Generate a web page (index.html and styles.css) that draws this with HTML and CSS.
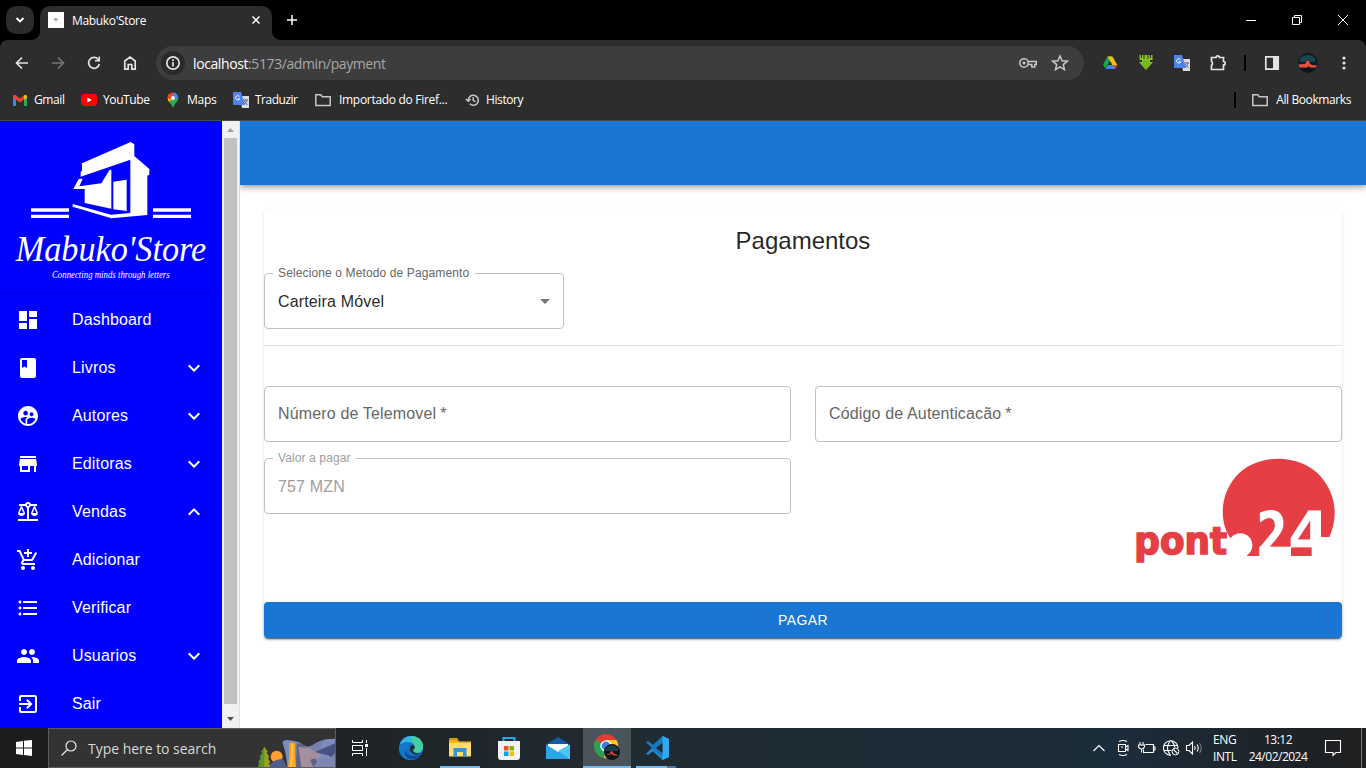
FILE: index.html
```html
<!DOCTYPE html>
<html lang="pt">
<head>
<meta charset="utf-8">
<title>Mabuko'Store</title>
<link rel="stylesheet" href="styles.css">
</head>
<body>
<div class="screen">

<header class="tabstrip">
  <div class="tab-search"><svg width="10" height="10" viewBox="0 0 10 10"><path d="M1.500 3 5 6.500 8.500 3" fill="none" stroke="#fff" stroke-width="1.800"/></svg></div>
  <div class="tab">
    <svg width="16" height="16" viewBox="0 0 16 16"><path d="M0 0h16v16H0z" fill="#fff"/><path d="M5 8 8 6l2 2z" fill="#888"/><path d="M6 9h4" stroke="#ccc"/></svg>
    <span class="tab-title">Mabuko'Store</span>
    <svg class="tab-close" width="8" height="8" viewBox="0 0 8 8"><path d="m.5.5 7 7m0-7-7 7" stroke="#fff" stroke-width="1.500"/></svg>
  </div>
  <svg class="new-tab" width="10" height="10" viewBox="0 0 10 10"><path d="M5 0v10M0 5h10" stroke="#fff" stroke-width="1.500"/></svg>
  <div class="window-buttons">
    <svg width="46" height="40" viewBox="0 0 46 40"><path d="M18 20.500h10" stroke="#fff"/></svg>
    <svg width="46" height="40" viewBox="0 0 46 40"><path d="M18.500 17.500h7v7h-7zM20.500 17v-1.500h7v7H26" fill="none" stroke="#fff"/></svg>
    <svg width="46" height="40" viewBox="0 0 46 40"><path d="m18 15 10 10m0-10L18 25" stroke="#fff"/></svg>
  </div>
</header>

<nav class="toolbar">
  <div class="tool"><svg width="16" height="16" viewBox="0 0 16 16"><path d="M14 8H3m5-5.500L2.500 8 8 13.500" class="ln"/></svg></div>
  <div class="tool"><svg width="16" height="16" viewBox="0 0 16 16"><path d="M2 8h11M8 2.500 13.500 8 8 13.500" class="ln dim"/></svg></div>
  <div class="tool"><svg width="16" height="16" viewBox="0 0 16 16"><path d="M13.300 9A5.400 5.400 0 1 1 12 4.200L13.500 6" class="ln"/><path d="M9 6.500h5V1.500h-1.500V5H9z" fill="#e3e3e3"/></svg></div>
  <div class="tool"><svg width="16" height="16" viewBox="0 0 16 16"><path d="M2.800 14.200V6L8 2l5.200 4v8.200H9.800V9.500H6.200v4.700z" class="ln"/></svg></div>
  <div class="omnibox">
    <div class="site-info"><svg width="16" height="16" viewBox="0 0 16 16"><circle cx="8" cy="8" r="6.200" class="ln"/><path d="M8 7v4.500M8 4.300V6" class="ln"/></svg></div>
    <span class="url"><b>localhost</b>:5173/admin/payment</span>
    <svg class="key" width="20" height="16" viewBox="0 0 20 16"><circle cx="6" cy="8" r="4.200" class="ln2"/><circle cx="6" cy="8" r="1.500" fill="#c7c7c7"/><path d="M10 6.500h8.300v3h-1.500V12h-3V9.500H10" class="ln2"/></svg>
    <svg width="18" height="18" viewBox="0 0 18 18"><path d="m9 2 2.100 4.700 5.100.5-3.900 3.400 1.200 5L9 12.900l-4.500 2.700 1.200-5-3.900-3.400 5.100-.5z" class="ln2"/></svg>
  </div>
  <div class="tool"><svg width="16" height="16" viewBox="0 0 16 16"><path d="M5.500 1.500 1 9.500l2.500 4L8 5.500z" fill="#0fa958"/><path d="M5.500 1.500h5L13 6 8 6z" fill="#18a05a"/><path d="M5.500 1.500h4.800l5 8.500h-4.800z" fill="#fbc011"/><path d="M3.500 14 6 10h9.300L13 14z" fill="#4285f4"/><path d="m12.700 10 2.600 0L13 14l-1.500-2z" fill="#e54335"/></svg></div>
  <div class="tool"><svg width="16" height="16" viewBox="0 0 16 16"><path d="M1.500 0H3v3h1V0h1.500v4h1V0h3v4h1V0H12v3h1V0h1.500v5H12v2h3l-7 8-7-8h3V5H1.500z" fill="#8bc525"/><path d="M5 5h6v3h2L8 14 3 8h2z" fill="#79b51c"/></svg></div>
  <div class="tool"><svg width="16" height="16" viewBox="0 0 16 16"><path d="M7 4h9v12H9z" fill="#dadce0"/><path d="M0 0h8l4 13H1q-1 0-1-1z" fill="#4c83ee"/><path d="M6.500 4.500a2.200 2.200 0 1 0 .3 2.300H4.800" fill="none" stroke="#fff"/><path d="M10 8h5m-2.500-1v1m1.500 0q-.5 3-3 4m0-3 3.500 4" stroke="#668" fill="none"/></svg></div>
  <div class="tool"><svg width="18" height="18" viewBox="0 0 18 18"><path d="M2.500 3.500H7a1.700 1.700 0 0 1 3.400 0h4.100v4a1.700 1.700 0 0 1 0 3.400v4.600h-12v-4a2.500 2.500 0 0 0 0-4z" class="ln"/></svg></div>
  <i class="split"></i>
  <div class="tool"><svg width="16" height="16" viewBox="0 0 16 16"><path d="M1.800 1.800h12.400v12.400H1.800z" class="ln"/><path d="M9 2h5v12H9z" fill="#e3e3e3"/></svg></div>
  <div class="tool"><svg width="20" height="20" viewBox="0 0 20 20"><circle cx="10" cy="10" r="10" fill="#101c22"/><path d="M2 5q8-6 15 0v4H2z" fill="#1a4652"/><path d="M.5 11.500 7 11l2-3h2l1 3 2 1 5 .5-1 2H12l-1-1.500-2 1.500H1.500z" fill="#ef4f39"/><path d="M3 16h14q-7 7-14 0z" fill="#111"/></svg></div>
  <div class="tool"><svg width="16" height="16" viewBox="0 0 16 16" fill="#e3e3e3"><circle cx="8" cy="3" r="1.600"/><circle cx="8" cy="8" r="1.600"/><circle cx="8" cy="13" r="1.600"/></svg></div>
</nav>

<nav class="bookmarks">
  <a class="bm gmail"><svg width="16" height="16" viewBox="0 0 16 16"><path d="M1 5v9h3V7z" fill="#4285f4"/><path d="M15 5v9h-3V7z" fill="#34a853"/><path d="M1 4.500Q1 2 3.500 3L8 6.500 12 3.300V7.500L8 10.500 1 5.800z" fill="#ea4335"/><path d="M12 3.300Q15 1.500 15 4.500v1.200l-3 2z" fill="#fbbc04"/></svg><span>Gmail</span></a>
  <a class="bm youtube"><svg width="16" height="16" viewBox="0 0 16 16"><rect y="2" width="16" height="12" rx="3" fill="#f00"/><path d="m6.300 5.500 4.500 2.500-4.500 2.500z" fill="#fff"/></svg><span>YouTube</span></a>
  <a class="bm maps"><svg width="16" height="16" viewBox="0 0 16 16"><path d="M2.700 6a5.300 5.300 0 0 1 10.600 0q0 2.500-2.500 5Q9 13 8 16 7 13 5 11 2.700 8.500 2.700 6z" fill="#34a853"/><path d="M2.700 6a5.300 5.300 0 0 1 1.300-3.700L8 6l-4 4Q2.700 8 2.700 6z" fill="#fbbc04"/><path d="M4 2.300Q5.500.6 8 .6L9.500 1 5 7.500 2.700 6Q2.700 4 4 2.300z" fill="#ea4335"/><path d="M9.500 1Q13 2 13.300 6H8z" fill="#4285f4"/><path d="M8 .6Q11 .6 12.300 3L8 7z" fill="#4285f4"/><circle cx="8" cy="6" r="1.900" fill="#fff"/></svg><span>Maps</span></a>
  <a class="bm translate"><svg width="16" height="16" viewBox="0 0 16 16"><path d="M7 4h9v12H9z" fill="#dadce0"/><path d="M0 0h8l4 13H1q-1 0-1-1z" fill="#4c83ee"/><path d="M6.500 4.500a2.200 2.200 0 1 0 .3 2.300H4.800" fill="none" stroke="#fff"/><path d="M10 8h5m-2.500-1v1m1.500 0q-.5 3-3 4m0-3 3.500 4" stroke="#668" fill="none"/></svg><span>Traduzir</span></a>
  <a class="bm folder"><svg width="16" height="16" viewBox="0 0 16 16"><path d="M.8 2.800h5l1.500 2h7.900v8.700H.8z" class="ln2"/></svg><span>Importado do Firef...</span></a>
  <a class="bm history"><svg width="16" height="16" viewBox="0 0 16 16"><path d="M3.300 8a5 5 0 1 1 1.500 3.800M.8 7l2.500 2.300L5.500 7M8.200 5.300v3l2.300 1.300" class="ln2"/></svg><span>History</span></a>
  <i class="split"></i>
  <a class="bm all"><svg width="16" height="16" viewBox="0 0 16 16"><path d="M.8 2.800h5l1.500 2h7.900v8.700H.8z" class="ln2"/></svg><span>All Bookmarks</span></a>
</nav>

<div class="page">
  <aside class="sidebar">
    <svg class="brand" width="222" height="174" viewBox="0 3 666 522" fill="#fff">
      <path d="M246 130 392 66l11 7v35l45 39v17l-6 3v118l-108 10-116-35v-8l115 32 58-5V119L242 170v-15l4-2z"/>
      <path d="M340 185l40-6v94l-40-5z"/>
      <path d="m304 190 24-39 6-2v117l-80-17v-42h-34l16-30 12-1-10 23z"/>
      <path d="M93 265h114v10H93zM93 284h114v10H93zM459 265h114v10H459zM459 284h114v10H459z"/>
      <text x="47" y="423" class="brand-name" textLength="572" lengthAdjust="spacingAndGlyphs">Mabuko'Store</text>
      <text x="156" y="474" class="brand-motto" textLength="353" lengthAdjust="spacingAndGlyphs">Connecting minds through letters</text>
    </svg>
    <ul class="menu">
      <li><svg class="mi" viewBox="0 0 24 24"><path d="M3 13h8V3H3v10zm0 8h8v-6H3v6zm10 0h8V11h-8v10zm0-18v6h8V3h-8z"/></svg><span>Dashboard</span></li>
      <li><svg class="mi" viewBox="0 0 24 24"><path d="M18 2H6c-1.100 0-2 .9-2 2v16c0 1.100.9 2 2 2h12c1.100 0 2-.9 2-2V4c0-1.100-.9-2-2-2zM6 4h5v8l-2.500-1.500L6 12V4z"/></svg><span>Livros</span><svg class="mi" viewBox="0 0 24 24"><path d="M16.590 8.590 12 13.170 7.410 8.590 6 10l6 6 6-6z"/></svg></li>
      <li><svg class="mi" viewBox="0 0 24 24"><path d="M11.990 2c-5.520 0-10 4.480-10 10s4.480 10 10 10 10-4.480 10-10-4.480-10-10-10zm3.610 6.340c1.070 0 1.930.86 1.930 1.930 0 1.070-.86 1.930-1.930 1.930-1.070 0-1.930-.86-1.930-1.930-.01-1.070.86-1.930 1.930-1.930zm-6-1.580c1.300 0 2.360 1.060 2.360 2.360 0 1.300-1.060 2.360-2.360 2.360s-2.360-1.060-2.360-2.360c0-1.310 1.050-2.360 2.360-2.360zm0 9.130v3.750c-2.400-.75-4.300-2.600-5.140-4.960 1.050-1.120 3.670-1.690 5.140-1.690.53 0 1.200.08 1.900.22-1.640.87-1.900 2.020-1.900 2.680zM11.990 20c-.27 0-.53-.01-.79-.04v-4.070c0-1.420 2.940-2.130 4.400-2.130 1.070 0 2.920.39 3.840 1.150-1.170 2.970-4.060 5.090-7.450 5.090z"/></svg><span>Autores</span><svg class="mi" viewBox="0 0 24 24"><path d="M16.590 8.590 12 13.170 7.410 8.590 6 10l6 6 6-6z"/></svg></li>
      <li><svg class="mi" viewBox="0 0 24 24"><path d="M20 4H4v2h16V4zm1 10v-2l-1-5H4l-1 5v2h1v6h10v-6h4v6h2v-6h1zm-9 4H6v-4h6v4z"/></svg><span>Editoras</span><svg class="mi" viewBox="0 0 24 24"><path d="M16.590 8.590 12 13.170 7.410 8.590 6 10l6 6 6-6z"/></svg></li>
      <li><svg class="mi" viewBox="0 0 24 24"><path d="M13 7.830c.85-.3 1.530-.98 1.830-1.830H18l-3 7c0 1.660 1.570 3 3.500 3s3.500-1.340 3.500-3l-3-7h2V4h-6.170c-.41-1.170-1.520-2-2.830-2s-2.420.83-2.830 2H3v2h2l-3 7c0 1.660 1.570 3 3.500 3S9 14.660 9 13L6 6h3.170c.3.85.98 1.530 1.830 1.830V19H2v2h20v-2h-9V7.830zM20.370 13h-3.740l1.870-4.360L20.370 13zm-13 0H3.630L5.500 8.640 7.370 13zM12 6c-.55 0-1-.45-1-1s.45-1 1-1 1 .45 1 1-.45 1-1 1z"/></svg><span>Vendas</span><svg class="mi" viewBox="0 0 24 24"><path d="m12 8-6 6 1.410 1.410L12 10.830l4.590 4.580L18 14z"/></svg></li>
      <li><svg class="mi" viewBox="0 0 24 24"><path d="M11 9h2V6h3V4h-3V1h-2v3H8v2h3v3zm-4 9c-1.100 0-1.990.9-1.990 2S5.900 22 7 22s2-.9 2-2-.9-2-2-2zm10 0c-1.100 0-1.990.9-1.990 2s.89 2 1.990 2 2-.9 2-2-.9-2-2-2zm-9.830-3.250l.03-.12.9-1.630h7.450c.75 0 1.410-.41 1.750-1.030l3.860-7.010L19.420 4h-.01l-1.100 2-2.760 5H8.530l-.13-.27L6.160 6l-.95-2-.94-2H1v2h2l3.600 7.590-1.350 2.450c-.16.28-.25.61-.25.96 0 1.100.9 2 2 2h12v-2H7.420c-.13 0-.25-.11-.25-.25z"/></svg><span>Adicionar</span></li>
      <li><svg class="mi" viewBox="0 0 24 24"><path d="M4 10.500c-.83 0-1.500.67-1.500 1.500s.67 1.500 1.500 1.500 1.500-.67 1.500-1.500-.67-1.500-1.500-1.500zm0-6c-.83 0-1.500.67-1.500 1.500S3.170 7.500 4 7.500 5.500 6.830 5.500 6 4.830 4.500 4 4.500zm0 12c-.83 0-1.500.68-1.500 1.500s.68 1.500 1.500 1.500 1.500-.68 1.500-1.500-.67-1.500-1.500-1.500zM7 19h14v-2H7v2zm0-6h14v-2H7v2zm0-8v2h14V5H7z"/></svg><span>Verificar</span></li>
      <li><svg class="mi" viewBox="0 0 24 24"><path d="M16 11c1.660 0 2.990-1.340 2.990-3S17.660 5 16 5c-1.660 0-3 1.340-3 3s1.340 3 3 3zm-8 0c1.660 0 2.990-1.340 2.990-3S9.660 5 8 5C6.340 5 5 6.340 5 8s1.340 3 3 3zm0 2c-2.330 0-7 1.170-7 3.500V19h14v-2.500c0-2.330-4.670-3.500-7-3.500zm8 0c-.29 0-.62.02-.97.05 1.160.84 1.970 1.970 1.970 3.450V19h6v-2.500c0-2.330-4.670-3.500-7-3.500z"/></svg><span>Usuarios</span><svg class="mi" viewBox="0 0 24 24"><path d="M16.590 8.590 12 13.170 7.410 8.590 6 10l6 6 6-6z"/></svg></li>
      <li><svg class="mi" viewBox="0 0 24 24"><path d="M10.090 15.590L11.500 17l5-5-5-5-1.410 1.410L12.670 11H3v2h9.670l-2.580 2.590zM19 3H5c-1.110 0-2 .9-2 2v4h2V5h14v14H5v-4H3v4c0 1.100.89 2 2 2h14c1.100 0 2-.9 2-2V5c0-1.100-.9-2-2-2z"/></svg><span>Sair</span></li>
    </ul>
  </aside>
  <div class="scrollbar">
    <svg width="17" height="17" viewBox="0 0 17 17"><path d="M5 11h7L8.500 7z" fill="#a3a3a3"/></svg>
    <i class="thumb"></i>
    <svg width="17" height="24" viewBox="0 0 17 24"><path d="M5 13h7l-3.500 4z" fill="#505050"/></svg>
  </div>
  <main class="content">
    <div class="appbar"></div>
    <section class="card">
      <h1>Pagamentos</h1>
      <div class="field method"><label>Selecione o Metodo de Pagamento</label><span>Carteira Móvel</span><svg width="24" height="24" viewBox="0 0 24 24"><path d="m7 10 5 5 5-5z" fill="#757575"/></svg></div>
      <hr>
      <div class="grid">
        <div class="field empty"><span>Número de Telemovel<em>*</em></span></div>
        <div class="field empty"><span>Código de Autenticacão<em>*</em></span></div>
        <div class="field off"><label>Valor a pagar</label><span>757 MZN</span></div>
        <svg class="ponto" width="202" height="106" viewBox="42 54 606 318">
          <path d="M331 294C297 245 300 165 347 110 410 38 540 38 603 110 649 165 655 230 628 291H575V348H380Z" fill="#e63e45"/>
          <path d="M322 298h50v60h-50z" fill="#fff"/><circle cx="361" cy="316" r="36" fill="#fff"/><path d="M345 335h43l-8 13h-35z" fill="#fff"/>
          <text x="43" y="343" class="pont" textLength="278" lengthAdjust="spacingAndGlyphs">pont</text>
          <text x="409" y="348" class="num" textLength="94" lengthAdjust="spacingAndGlyphs">2</text>
          <path d="M418 320h95v28h-95z" fill="#fff"/>
          <text x="504" y="348" class="num" textLength="126" lengthAdjust="spacingAndGlyphs">4</text>
          <path d="M514 322h61v26h-61z" fill="#e63e45"/>
        </svg>
      </div>
      <button class="pay">PAGAR</button>
    </section>
  </main>
</div>

<footer class="taskbar">
  <div class="start"><svg width="16" height="16" viewBox="0 0 16 16"><path d="m0 2 7-1v6.500H0zM8 .8 16 0v7.500H8zM0 8.500h7V15l-7-1zM8 8.500h8V16l-8-1z" fill="#fff"/></svg></div>
  <div class="search">
    <svg width="16" height="16" viewBox="0 0 16 16"><circle cx="10" cy="6" r="5" fill="none" stroke="#e8e8e8" stroke-width="1.200"/><path d="M6.500 9.500.5 15.500" stroke="#e8e8e8" stroke-width="1.300"/></svg>
    <span>Type here to search</span>
    <svg class="scene" width="77" height="38" viewBox="774 9 231 114">
      <path d="M848 46q10-6 22-3l26 5 10 6q12 10 26 8 20-16 45-22l28-2v87H862q-2-40-14-75z" fill="#7f8bb8"/>
      <path d="M890 52q24 0 42 28l32 43h-76z" fill="#5d6384"/><path d="M895 62q40 0 77 34l-20-2-22 8 10 21h-36z" fill="#a58f9c"/><path d="m925 62 50-20-16 26-14 8z" fill="#777fae"/><path d="m945 78 60-26v50l-20-14z" fill="#45527f"/><path d="m940 123 22-28 23 6 20-19v41z" fill="#7d86ac"/>
      <circle cx="830" cy="92" r="18" fill="#ff9d32"/><path d="M868 52q14-6 18 4-4 30 2 67h-24q6-35 4-71z" fill="#ffa51e"/><path d="M876 54q3 30-4 69" stroke="#ffc93a" stroke-width="6" fill="none"/>
      <path d="m808 116 20-14 20-4 14 25h-54z" fill="#4d5e8d"/><path d="m793 62 10 16-4 1 9 15-5 1 8 14-5 1 4 13h-36l4-13-4-1 9-14-5-1 9-15-4-1z" fill="#55972f"/><path d="m793 62 10 16-4 1 9 15-5 1 8 14-5 1 4 13h-17z" fill="#a1a01e"/>
    </svg>
  </div>
  <div class="app view"><svg width="18" height="18" viewBox="0 0 18 18"><path d="M1.500 1v2.500h10V1M1.500 6.500h10v5h-10zM1.500 17v-2.500h10V17M15.500 1v3M15.500 9v8" fill="none" stroke="#fff"/><path d="M14 5h3v3h-3z" fill="#fff"/></svg></div>
  <div class="app"><svg width="24" height="24" viewBox="0 0 24 24"><circle cx="12" cy="12" r="12" fill="#1673c3"/><path d="M1 8Q4 0 12 0q9 0 12 9 1 7-6 8-6 0-4-4 1-5-4-5-5-1-9 0z" fill="#32b6e2"/><path d="M12 0q11 0 12 10 0 7-7 7-4 0-3-3 3-4-1-8z" fill="#45cfa0"/><path d="M0 12q2-7 9-6 6 0 7 5-4-4-8 1-3 6 5 8 5 1 9-2-4 7-12 6Q0 22 0 12z" fill="#1479ca"/><path d="M8 12q-3 7 6 8 5 0 8-2-4 7-12 5-7-4-2-11z" fill="#0e4d91"/><path d="M12 9q4 0 4 3-3 2-1 4 3 2 7 1-5 3-9 0-4-3-1-8z" fill="#1a3443"/></svg></div>
  <div class="app open"><svg width="22" height="20" viewBox="0 0 22 20"><path d="M0 1.500h8l2 2h12V18H0z" fill="#f5b51f"/><path d="M0 5h22v13.500H0z" fill="#ffdc70"/><path d="M0 1.500Q0 0 1 0h7l2 2.500H0z" fill="#d89a10"/><path d="M4.500 18.500V10h13v8.500H14V14H8v4.500z" fill="#3594d8"/></svg></div>
  <div class="app"><svg width="24" height="24" viewBox="0 0 24 24"><path d="M6.500 6V2h11v4" fill="none" stroke="#25a9e8" stroke-width="2"/><path d="M1 5h22v16q0 3-3 3H4q-3 0-3-3z" fill="#f2f2f2"/><path d="M7 10h4.500v4.500H7z" fill="#f25022"/><path d="M12.500 10H17v4.500h-4.500z" fill="#7fba00"/><path d="M7 15.500h4.500V20H7z" fill="#00a4ef"/><path d="M12.500 15.500H17V20h-4.500z" fill="#ffb900"/></svg></div>
  <div class="app"><svg width="24" height="22" viewBox="0 0 24 22"><path d="M0 7.500 12 0l12 7.500V12H0z" fill="#135ca5"/><path d="M2 7h20v9H2z" fill="#fff"/><path d="M0 7.500 12 15l12-7.500V22H0z" fill="#28a8ea"/><path d="m12 14 12-6.500V22z" fill="#4cc8f5"/></svg></div>
  <div class="app current"><svg width="26" height="26" viewBox="0 0 26 26"><circle cx="12" cy="12" r="12" fill="#e23d30"/><path d="M12 12 1.600 6A12 12 0 0 0 10 23.800l6-10z" fill="#23a455"/><path d="M12 12 10 24A12 12 0 0 0 22.400 6H12z" fill="#fdc922"/><circle cx="12" cy="12" r="5.800" fill="#fff"/><circle cx="12" cy="12" r="4.400" fill="#3c7de6"/><circle cx="18" cy="18" r="8" fill="#12181d"/><path d="M12 14q6-5 12 0v3H12z" fill="#1b3c49"/><path d="m11.500 20.500 4-.5 1.500-3 1.500.5 1 2 4 1.500-1 1-4-1-1-1.500-2 1.500z" fill="#d74a37"/></svg></div>
  <div class="app open code"><svg width="24" height="24" viewBox="0 0 24 24"><path d="M17.500 0 24 3v18l-6.500 3L8 15.200 3 19l-2-1.300L15.500 4z" fill="#1f8ad2"/><path d="M17.500 0 8 8.800 3 5 1 6.300 17.500 22z" fill="#1679bd"/><path d="M17.500 0 24 3v18l-6.500 3z" fill="#31a8f0"/><path d="M17.500 7v10L11 12z" fill="#1e292f"/></svg></div>
  <div class="tray">
    <svg width="24" height="40" viewBox="0 0 24 40"><path d="m6.500 23 5.500-5.500 5.500 5.500" class="tr"/></svg>
    <svg width="24" height="40" viewBox="0 0 24 40"><path d="M8 13.500q4-2 8 0M8 26.500q4 2 8 0M7.500 16.500h7v7h-7zM14.500 19l2.500-1.500v5L14.500 21M10 19h2" class="tr"/></svg>
    <svg width="24" height="40" viewBox="0 0 24 40"><path d="M5 14v3m3-3v3M3.500 17h6v2q-1 2-3 2t-3-2zM6.500 21v3.500M8.500 21.500v3h10v-8h-8M18.500 19h1.500v3h-1.500" class="tr"/></svg>
    <svg width="24" height="40" viewBox="0 0 24 40"><path d="M19 20a7.300 7.300 0 1 0-7 7.300M4.500 17.500h14M4.500 22.500h8M11.500 12.500q-6 7 0 15M12 12.500q4 4 3.500 7" class="tr"/><circle cx="16.500" cy="23.500" r="3.400" fill="#1b2935" stroke="#fff"/><path d="m14.500 21.500 4 4" class="tr"/></svg>
    <svg width="24" height="40" viewBox="0 0 24 40"><path d="M3.500 17.500H6l3.500-3.500v12L6 22.500H3.500zM11.500 18q1.500 2 0 4M14 16.500q2.500 3.500 0 7" class="tr"/><path d="M16.500 15q3.500 5 0 10" class="tr faint"/></svg>
    <div class="lang"><span>ENG</span><span>INTL</span></div>
    <div class="clock"><span>13:12</span><span>24/02/2024</span></div>
    <svg class="notes" width="18" height="18" viewBox="0 0 18 18"><path d="M1.500 1.500h15v12H12l-3 3v-3H1.500z" class="tr"/></svg>
    <i class="peek"></i>
  </div>
</footer>
</div>
</body>
</html>
```
FILE: styles.css
```css
* { box-sizing: border-box; }
body { margin: 0; overflow: hidden; font-family: "Liberation Sans", Arial, sans-serif; }
svg { display: block; flex: none; }
.screen { width: 1366px; height: 768px; display: flex; flex-direction: column; background: #000; }

/* browser chrome */
.tabstrip, .toolbar, .bookmarks, .taskbar { font-family: "Open Sans", "Noto Sans", sans-serif; color: #fff; display: flex; }
.tabstrip { height: 40px; background: #000; }
.tab-search { width: 28px; height: 28px; margin: 6px 0 0 6px; border-radius: 10px; background: #2b2b2b; display: grid; place-items: center; }
.tab { position: relative; width: 232px; height: 34px; margin: 6px 0 0 6px; padding: 0 12px 6px 8px; border-radius: 10px 10px 0 0; background: #2d2d2d; display: flex; align-items: center; }
.tab::before, .tab::after { content: ""; position: absolute; bottom: 0; width: 8px; height: 8px; }
.tab::before { left: -8px; background: radial-gradient(circle at 0 0, transparent 7.5px, #2d2d2d 8px); }
.tab::after { right: -8px; background: radial-gradient(circle at 100% 0, transparent 7.5px, #2d2d2d 8px); }
.tab-title { margin-left: 8px; font-size: 12px; letter-spacing: -.33px; flex: 1; }
.new-tab { margin: 15px 0 0 15px; }
.window-buttons { margin-left: auto; display: flex; }
.toolbar { height: 46px; padding: 0 4px; align-items: center; background: #2d2d2d; border-radius: 8px 8px 0 0; }
.tool { width: 36px; height: 36px; display: grid; place-items: center; }
.ln { fill: none; stroke: #e3e3e3; stroke-width: 1.7; }
.ln2 { fill: none; stroke: #c7c7c7; stroke-width: 1.5; }
.dim { stroke: #757575; }
.omnibox { width: 928px; height: 34px; margin: 0 8px; padding: 0 15px 0 5px; border-radius: 17px; background: #3d3d3d; display: flex; align-items: center; }
.site-info { width: 24px; height: 24px; border-radius: 50%; background: #2a2a2a; display: grid; place-items: center; }
.url { flex: 1; margin-left: 8px; font-size: 14px; letter-spacing: -.4px; color: #a8a8a8; }
.url b { font-weight: 400; color: #fff; }
.key { margin-right: 13px; }
.split { width: 2px; height: 16px; margin: 0 8px; background: #000; }
.bookmarks { height: 35px; padding: 0 15px 6px 12px; align-items: center; background: #2d2d2d; border-bottom: 1px solid #4a4a4a; font-size: 12px; letter-spacing: -.4px; }
.bm { display: flex; align-items: center; gap: 6px; white-space: nowrap; }
.bm span { padding-bottom: 1px; }
.gmail { width: 69px; }
.youtube { width: 84px; }
.maps { width: 68px; letter-spacing: -.25px; }
.translate { width: 82px; letter-spacing: -.5px; }
.folder { width: 150px; gap: 8px; letter-spacing: -.3px; }
.history { gap: 5px; }
.bookmarks .split { margin: 0 16px 0 auto; }
.all { gap: 8px; }

/* application */
.page { flex: 1; min-height: 0; display: flex; background: #fff; }
.sidebar { width: 222px; background: #00f; color: #fff; }
.brand { border-bottom: 1px solid #0000e0; height: 175px; }
.brand-name { font: italic 110px "Liberation Serif", serif; }
.brand-motto { font: italic 29px "Liberation Serif", serif; }
.menu { margin: 0; padding: 0; list-style: none; }
.menu li { height: 48px; padding: 0 16px; display: flex; align-items: center; font-size: 16px; letter-spacing: .15px; }
.menu span { flex: 1; margin-left: 32px; line-height: 24px; padding-bottom: 1px; }
.mi { width: 24px; height: 24px; fill: #fff; }
.scrollbar { width: 18px; background: #f1f1f1; border-right: 1px solid #e0e0e0; display: flex; flex-direction: column; }
.thumb { flex: 1; margin: 0 2px; background: #c1c1c1; }
.content { flex: 1; }
.appbar { height: 64px; background: #1976d2; box-shadow: 0 2px 4px -1px rgba(0,0,0,.2), 0 4px 5px rgba(0,0,0,.14), 0 1px 10px rgba(0,0,0,.12); clip-path: inset(0 0 -20px 0); }
.card { margin: 24px 24px 0; border-radius: 4px; color: rgba(0,0,0,.87); box-shadow: 0 2px 1px -1px rgba(0,0,0,.2), 0 1px 1px rgba(0,0,0,.1), 0 1px 3px rgba(0,0,0,.12); }
h1 { margin: 0; padding-top: 16px; height: 64px; font-size: 24px; line-height: 32px; font-weight: 400; text-align: center; }
.field { position: relative; height: 56px; padding: 0 6px 0 13px; border: 1px solid #c0c0c0; border-radius: 4px; display: flex; align-items: center; justify-content: space-between; font-size: 16px; letter-spacing: .15px; }
.field > span { padding-top: 2px; }
.field label { position: absolute; top: -8px; left: 8px; padding: 0 5px; font-size: 12px; line-height: 14px; letter-spacing: .11px; color: #666; background: #fff; }
.field em { font-style: normal; margin-left: 4px; }
.method { width: 300px; }
.method label { padding-right: 6px; letter-spacing: .125px; }
.empty { color: #666; padding-bottom: 2px; }
.off, .off label { color: #9e9e9e; }
hr { margin: 16px 0 40px; border: 0; height: 1px; background: #e0e0e0; }
.grid { display: grid; grid-template-columns: 1fr 1fr; gap: 16px 24px; height: 216px; align-content: start; }
.ponto { justify-self: end; margin-right: 6px; overflow: visible; }
.pont { font: bold 114px "DejaVu Sans", sans-serif; fill: #e63e45; stroke: #e63e45; stroke-width: 5px; }
.num { font: bold 186px "DejaVu Sans", sans-serif; fill: #fff; }
.pay { display: block; width: 100%; height: 36px; border: 0; border-radius: 4px; background: #1976d2; color: #fff; font: 14px "Liberation Sans", Arial, sans-serif; letter-spacing: .4px; box-shadow: 0 3px 1px -2px rgba(0,0,0,.2), 0 2px 2px rgba(0,0,0,.14), 0 1px 5px rgba(0,0,0,.12); }

/* desktop taskbar */
.taskbar { height: 40px; background: linear-gradient(90deg, #1c1c1c, #1e2326 26%, #202c33 48%, #1b2c3a 82%, #1d242b 92%, #1f1f1f); }
.start { width: 48px; display: grid; place-items: center; }
.search { width: 288px; height: 40px; padding-left: 12px; border: 1px solid #5c5c5c; background: #333; display: flex; align-items: center; overflow: hidden; }
.search span { flex: 1; margin-left: 11px; font-size: 14px; letter-spacing: -.03px; color: #d8d8d8; white-space: nowrap; }
.app { width: 49px; height: 40px; display: grid; place-items: center; position: relative; }
.app.view { width: 48px; margin-right: 2px; }
.open::after { content: ""; position: absolute; bottom: 0; left: 5px; width: 40px; height: 2px; background: #76b9ed; }
.app.code::after { left: 4px; background: linear-gradient(90deg, #76b9ed 31px, #4f7795 31px); }
.app.current { width: 48px; margin: 0 1px; background: #4b545b; border-bottom: 2px solid #76b9ed; }
.tray { margin-left: auto; display: flex; align-items: center; font-size: 12px; line-height: 17px; }
.tr { fill: none; stroke: #fff; stroke-width: 1.1; }
.faint { opacity: .4; }
.lang, .clock { display: flex; flex-direction: column; letter-spacing: -.4px; }
.lang { margin-left: 6px; width: 27px; }
.clock { width: 76px; align-items: center; letter-spacing: -.5px; }
.notes { margin-left: 8px; }
.peek { width: 1px; height: 40px; margin: 0 4px 0 19px; background: #777; }
```
